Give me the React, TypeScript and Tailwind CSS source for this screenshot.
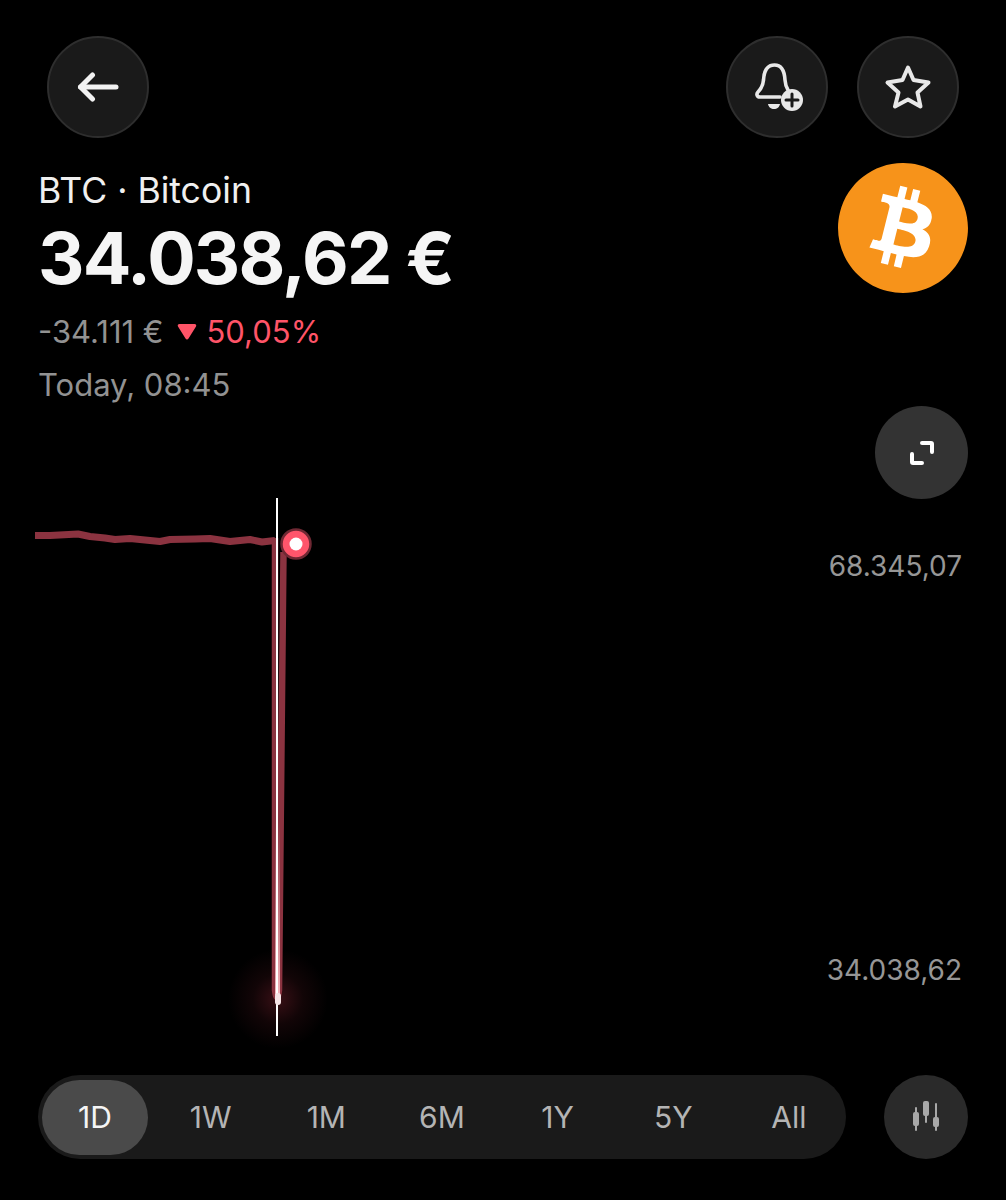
import { SiBitcoin } from 'react-icons/si'

const ranges = ['1D', '1W', '1M', '6M', '1Y', '5Y', 'All']

const linePoints =
  '35,535.5 50,535.5 78,534 90,536.5 105,538 115,539.5 130,538.5 150,540.5 160,541.5 170,539.5 195,539 210,538.5 230,541.5 250,539.5 262,542 275,540.5'

function BellPlus() {
  return (
    <svg width="54" height="54" viewBox="0 0 54 54" fill="none">
      <path
        d="M30 37H10C7 37 6 34 8 32C11 29 13 26 13.500 20C14 11 17 5 24.500 5C31 5 34.500 11 35 20C35.300 24 36 27 38 30"
        stroke="#e8e8e8"
        strokeWidth="3.600"
        strokeLinecap="round"
        strokeLinejoin="round"
      />
      <path d="M18 44h12c-.5 3-3 5-6 5s-5.500-2-6-5z" fill="#e8e8e8" />
      <circle cx="42" cy="40" r="11" fill="#e8e8e8" />
      <path d="M42 34v12M36 40h12" stroke="#1a1a1a" strokeWidth="3" strokeLinecap="round" />
    </svg>
  )
}

function StarIcon() {
  return (
    <svg width="50" height="50" viewBox="883 62 50 50" fill="none">
      <polygon
        points="908,67.500 913.500,80 928.500,82.500 917.500,92.500 920.500,106.500 908,99.500 895,106.500 898.500,92.500 887.500,82.500 902.500,80"
        stroke="#e8e8e8"
        strokeWidth="4"
        strokeLinejoin="round"
      />
    </svg>
  )
}

function ExpandIcon() {
  return (
    <svg width="26" height="26" viewBox="0 0 26 26" fill="none" stroke="#fff" strokeWidth="4" strokeLinecap="round" strokeLinejoin="round">
      <path d="M13 3h9a1 1 0 0 1 1 1v8" />
      <path d="M3 14v8a1 1 0 0 0 1 1h9" />
    </svg>
  )
}

function CandleIcon() {
  return (
    <svg width="30" height="32" viewBox="0 0 30 32" fill="#a8a8a8">
      <rect x="4" y="6" width="2" height="24" rx="1" />
      <rect x="2" y="11" width="6" height="14" rx="2" />
      <rect x="14" y="2" width="2" height="20" rx="1" />
      <rect x="12" y="0" width="6" height="15" rx="2" />
      <rect x="24" y="2" width="2" height="28" rx="1" />
      <rect x="22" y="16" width="6" height="10" rx="2" />
    </svg>
  )
}

function Chart() {
  return (
    <svg className="absolute inset-0" width="1006" height="670" viewBox="0 405 1006 670" fill="none">
      <defs>
        <radialGradient id="glow">
          <stop offset="0%" stopColor="#ff4560" stopOpacity="0.22" />
          <stop offset="50%" stopColor="#ff4560" stopOpacity="0.07" />
          <stop offset="100%" stopColor="#ff4560" stopOpacity="0" />
        </radialGradient>
        <linearGradient id="core" gradientUnits="userSpaceOnUse" x1="0" y1="820" x2="0" y2="995">
          <stop offset="0%" stopColor="#f3b4bb" stopOpacity="0" />
          <stop offset="100%" stopColor="#f3b4bb" stopOpacity="1" />
        </linearGradient>
      </defs>
      <circle cx="278" cy="999" r="50" fill="url(#glow)" />
      <polyline points={linePoints} stroke="#8b3340" strokeWidth="7" strokeLinejoin="round" />
      <path d="M275 538 L275 990 Q277 1004 279 990 L283.500 552" stroke="#8b3340" strokeWidth="6.500" />
      <path d="M277.500 820 V995" stroke="url(#core)" strokeWidth="5" />
      <path d="M277 498 V1036" stroke="#ffffff" strokeWidth="2" />
      <rect x="275" y="993" width="6" height="12" rx="3" fill="#f6e4e6" />
      <circle cx="296" cy="544" r="14.500" fill="#ff556b" stroke="#6f2833" strokeWidth="2.500" />
      <circle cx="296" cy="544" r="6.500" fill="#ffffff" />
    </svg>
  )
}

export default function App() {
  return (
    <div className="w-[1006px] h-[1200px] bg-black flex flex-col text-white" style={{ fontFamily: 'Inter, sans-serif' }}>
      {/* Header */}
      <div className="flex items-center justify-between pt-[36px] px-[47px]">
        <button className="w-[102px] h-[102px] rounded-full bg-[#1a1a1a] border-2 border-[#2e2e2e] flex items-center justify-center">
          <svg width="42" height="32" viewBox="0 0 42 32" fill="none" stroke="#f2f2f2" strokeWidth="5" strokeLinecap="round" strokeLinejoin="round">
            <path d="M39 16H3.500" />
            <path d="M15.500 4L3.500 16l12 12" />
          </svg>
        </button>
        <div className="flex gap-[29px]">
          <button className="w-[102px] h-[102px] rounded-full bg-[#1a1a1a] border-2 border-[#2e2e2e] flex items-center justify-center">
            <BellPlus />
          </button>
          <button className="w-[102px] h-[102px] rounded-full bg-[#1a1a1a] border-2 border-[#2e2e2e] flex items-center justify-center">
            <StarIcon />
          </button>
        </div>
      </div>

      {/* Price summary */}
      <div className="flex items-start justify-between px-[38px] mt-[25px]">
        <div className="flex flex-col">
          <p className="mt-[8px] text-[35.600px] leading-[40px] text-[#f0f0f0]">BTC · Bitcoin</p>
          <p className="mt-[7px] text-[72px] leading-[80px] font-bold tracking-[-1.850px] text-[#f5f5f5] whitespace-nowrap">34.038,62 €</p>
          <div className="mt-[14px] flex items-center text-[31px] leading-[40px]">
            <span className="text-[#929292]">-34.111 €</span>
            <svg className="ml-[13px] mr-[10px]" width="20" height="18" viewBox="0 0 20 18">
              <path d="M2.500 1h15c1.500 0 2.200 1.300 1.500 2.500l-7.500 12c-.7 1.200-2.300 1.200-3 0L1 3.500C.3 2.300 1 1 2.500 1z" fill="#ff5468" />
            </svg>
            <span className="text-[#ff5468]">50,05%</span>
          </div>
          <p className="mt-[13px] text-[31px] leading-[40px] text-[#929292]">Today, 08:45</p>
        </div>
        <div className="relative w-[130px] h-[130px] flex items-center justify-center">
          <div className="absolute inset-[6px] rounded-full bg-white" />
          <SiBitcoin className="relative" size={130} color="#f7931a" />
        </div>
      </div>

      {/* Chart */}
      <div className="relative flex-1 flex flex-col items-end pr-[38px] pt-[1px]">
        <Chart />
        <button className="relative w-[93px] h-[93px] rounded-full bg-[#333333] flex items-center justify-center">
          <ExpandIcon />
        </button>
        <p className="relative mt-[49px] mr-[6px] text-[28px] leading-[36px] text-[#969696]">68.345,07</p>
        <p className="relative mt-[368px] mr-[6px] text-[28px] leading-[36px] text-[#969696]">34.038,62</p>
      </div>

      {/* Range selector */}
      <div className="flex items-center justify-between px-[38px] pb-[41px]">
        <div className="w-[808px] h-[84px] rounded-full bg-[#1a1a1a] px-[4px] flex items-center justify-between">
          {ranges.map((r, i) => (
            <div
              key={r}
              className={`w-[106px] h-[75px] rounded-full flex items-center justify-center text-[30px] ${
                i === 0 ? 'bg-[#4a4a4a] text-[#f5f5f5]' : 'text-[#b4b4b4]'
              }`}
            >
              {r}
            </div>
          ))}
        </div>
        <button className="w-[84px] h-[84px] rounded-full bg-[#2a2a2a] flex items-center justify-center">
          <CandleIcon />
        </button>
      </div>
    </div>
  )
}
